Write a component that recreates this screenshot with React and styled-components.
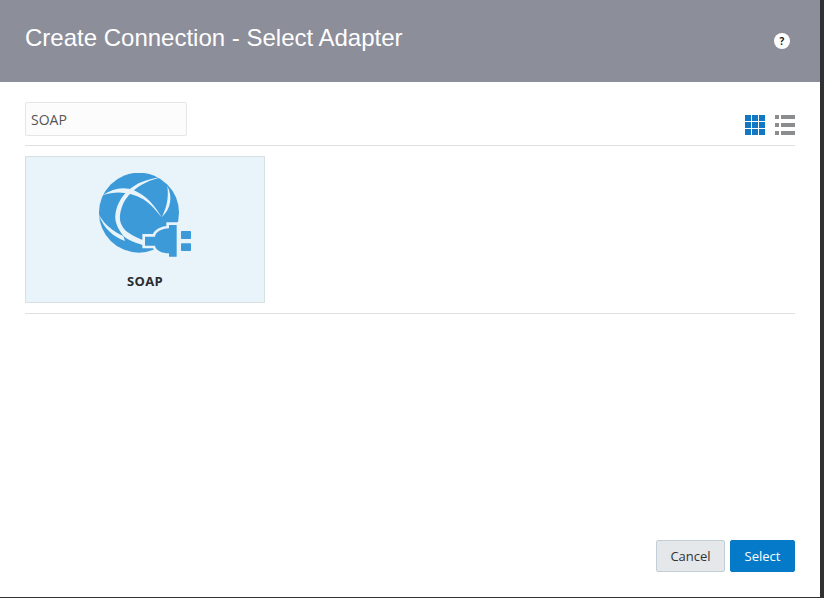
import React from "react";
import styled, { createGlobalStyle } from "styled-components";

const Global = createGlobalStyle`
  html, body { margin: 0; padding: 0; background: #2f3133; }
  * { box-sizing: border-box; }
`;

const Dialog = styled.div`
  width: 820px;
  height: 597px;
  background: #fff;
  display: flex;
  flex-direction: column;
  font-family: "Open Sans", "Noto Sans", sans-serif;
`;

const Header = styled.header`
  height: 82px;
  flex: none;
  background: #8c8e9a;
  display: flex;
  align-items: flex-start;
  justify-content: space-between;
  padding: 23px 30px 0 25px;
`;

const Title = styled.h1`
  margin: 0;
  font: 400 24px/30px "Liberation Sans", Arial, sans-serif;
  color: #fff;
`;

const HelpButton = styled.button`
  width: 16px;
  height: 16px;
  margin-top: 10px;
  padding: 0;
  border: 0;
  border-radius: 50%;
  background: #fff;
  color: #222;
  font: 700 10px/16px "Open Sans", sans-serif;
  text-align: center;
`;

const Body = styled.main`
  flex: 1;
  display: flex;
  flex-direction: column;
  padding: 20px 25px 0;
`;

const Toolbar = styled.div`
  display: flex;
  justify-content: space-between;
  align-items: flex-end;
  height: 44px;
  padding-bottom: 10px;
  border-bottom: 1px solid #e0e0e0;
`;

const Search = styled.input`
  width: 162px;
  height: 34px;
  margin-bottom: -1px;
  align-self: flex-start;
  border: 1px solid #e4e6e8;
  border-radius: 2px;
  background: #fcfcfc;
  padding: 0 5px;
  font: 400 14px "Open Sans", sans-serif;
  color: #555;
  outline: none;
`;

const Views = styled.div`
  display: flex;
  gap: 10px;
  align-items: center;
`;

const CardArea = styled.div`
  padding: 10px 0;
  border-bottom: 1px solid #e0e0e0;
`;

const Card = styled.div`
  width: 240px;
  height: 147px;
  background: #e8f3fa;
  border: 1px solid #d8e0e4;
  display: flex;
  flex-direction: column;
  align-items: center;
  padding-top: 16px;
`;

const CardIcon = styled.svg`
  display: block;
  width: 96px;
  height: 90px;
  margin-left: -2px;
`;

const CardLabel = styled.div`
  margin-top: 10px;
  font: 700 13px/16px "Open Sans", sans-serif;
  letter-spacing: 0.4px;
  color: #2a2d30;
`;

const Footer = styled.footer`
  margin-top: auto;
  display: flex;
  justify-content: flex-end;
  gap: 5px;
  padding-bottom: 25px;
`;

const Button = styled.button`
  height: 32px;
  padding: 0;
  width: ${(p) => p.$w}px;
  border-radius: 2px;
  border: 1px solid ${(p) => (p.$primary ? "#047ac8" : "#c4ced7")};
  background: ${(p) => (p.$primary ? "#047ac8" : "#e4e8ea")};
  color: ${(p) => (p.$primary ? "#fff" : "#333")};
  font: 400 13px "Open Sans", sans-serif;
`;

const GridIcon = () => (
  <svg width="20" height="20" viewBox="0 0 20 20" fill="#1278c4">
    {[0, 7, 14].flatMap((y) =>
      [0, 7, 14].map((x) => <rect key={`${x}-${y}`} x={x} y={y} width="6" height="6" />)
    )}
  </svg>
);

const ListIcon = () => (
  <svg width="20" height="20" viewBox="0 0 20 20" fill="#8a8c8e">
    {[0, 8, 16].map((y) => (
      <g key={y}>
        <rect x="0" y={y} width="4" height="4" />
        <rect x="6" y={y} width="14" height="4" />
      </g>
    ))}
  </svg>
);

const PLUG =
  "M195 230 H225 C226 216 246 205 267 205 V195 H290 V290 H267 V280 C246 280 226 270 225 257 H195 Z";

const SoapIcon = () => (
  <CardIcon viewBox="48 39 288 270">
    <circle cx="177" cy="158" r="120" fill="#3d9ad9" />
    <g fill="#e8f3fa">
      <path d="M68 106 C100 85 130 78 165 92 C195 105 225 135 245 172 C225 148 210 130 190 118 C150 96 110 92 68 106Z" />
      <path d="M248 52 C195 60 145 95 128 135 C118 160 117 180 125 195 C132 212 150 225 195 243 L190 256 C160 246 138 238 128 225 C113 205 104 185 106 165 C109 130 132 95 167 75 C190 62 220 54 248 52Z" />
      <path d="M57 165 C75 195 100 215 130 228 L135 243 C100 230 70 205 57 165Z" />
      <path d="M262 78 C278 110 274 145 245 172 C259 145 267 115 262 78Z" />
    </g>
    <path d={PLUG} fill="none" stroke="#e8f3fa" strokeWidth="16" strokeLinejoin="miter" />
    <path d={PLUG} fill="#3d9ad9" />
    <rect x="303" y="213" width="30" height="24" rx="2" fill="#3d9ad9" />
    <rect x="303" y="250" width="30" height="23" rx="2" fill="#3d9ad9" />
  </CardIcon>
);

export default function App() {
  return (
    <>
      <Global />
      <Dialog>
        <Header>
          <Title>Create Connection - Select Adapter</Title>
          <HelpButton>?</HelpButton>
        </Header>
        <Body>
          <Toolbar>
            <Search defaultValue="SOAP" />
            <Views>
              <GridIcon />
              <ListIcon />
            </Views>
          </Toolbar>
          <CardArea>
            <Card>
              <SoapIcon />
              <CardLabel>SOAP</CardLabel>
            </Card>
          </CardArea>
          <Footer>
            <Button $w={69}>Cancel</Button>
            <Button $w={65} $primary>Select</Button>
          </Footer>
        </Body>
      </Dialog>
    </>
  );
}
